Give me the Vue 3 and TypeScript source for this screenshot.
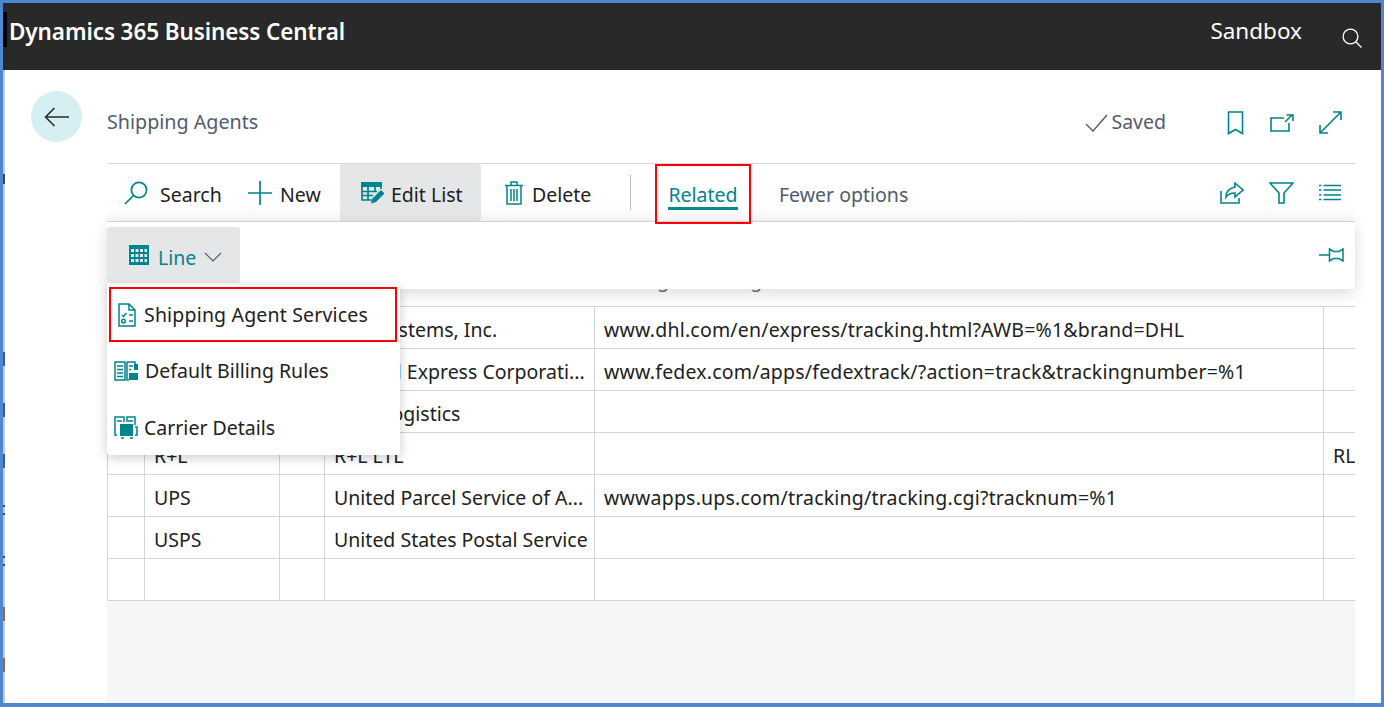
<template>
  <div class="frame">
    <header class="topbar">
      <span class="brand">Dynamics 365 Business Central</span>
      <span class="env">Sandbox</span>
      <svg class="top-search" width="20" height="20" viewBox="0 0 20 20" fill="none" stroke="#fff" stroke-width="1.3">
        <circle cx="8.500" cy="8.500" r="7.400" />
        <path d="M13.800 13.800 19.500 19.500" />
      </svg>
    </header>

    <main class="page">
      <div class="edge-strip"></div>
      <div class="back-col">
        <button class="back-btn">
          <svg width="26" height="20" viewBox="0 0 26 20" fill="none" stroke="#2b2b2b" stroke-width="1.6">
            <path d="M25 10H1.500M10.500 1 1.500 10l9 9" />
          </svg>
        </button>
      </div>

      <div class="content">
        <div class="page-head">
          <span class="page-title">Shipping Agents</span>
          <div class="page-state">
            <svg width="23" height="18" viewBox="0 0 23 18" fill="none" stroke="#505c6d" stroke-width="1.4">
              <path d="M1 10 8 17 22 1" />
            </svg>
            <span>Saved</span>
          </div>
          <div class="page-icons">
            <svg width="17" height="24" viewBox="0 0 17 24" fill="none" stroke="#00848d" stroke-width="1.6">
              <path d="M1.500 1h14v21.500l-7-4-7 4z" />
            </svg>
            <svg width="24" height="18" viewBox="0 0 24 18" fill="none" stroke="#00848d" stroke-width="1.6">
              <path d="M14 4H1v13h18V9M15 8l7-7M16.500 1H23v6" />
            </svg>
            <svg width="23" height="23" viewBox="0 0 23 23" fill="none" stroke="#00848d" stroke-width="1.6">
              <path d="M1 22 22 1M14 1h8v8M1 14v8h8" />
            </svg>
          </div>
        </div>

        <div class="toolbar">
          <button class="tool tool-search">
            <svg width="24" height="24" viewBox="0 0 24 24" fill="none" stroke="#00848d" stroke-width="1.7">
              <circle cx="15" cy="9" r="7.600" />
              <path d="M9.500 14.500 1 23" />
            </svg>
            <span>Search</span>
          </button>
          <button class="tool tool-new">
            <svg width="24" height="24" viewBox="0 0 24 24" fill="none" stroke="#00848d" stroke-width="1.7">
              <path d="M12 0v24M0 12h24" />
            </svg>
            <span>New</span>
          </button>
          <button class="tool tool-edit">
            <svg width="24" height="22" viewBox="0 0 24 22" fill="none">
              <path d="M0 0h21v5H0z" fill="#00848d" />
              <path d="M1 5v13h10M7 5v13M14 5v5M1 9.500h15M1 13.500h11M20 5v2" stroke="#00848d" stroke-width="1.700" />
              <path d="M10 21.500l1.500-5L20 8l3.500 3.500-8.500 8.500z" fill="#00848d" />
            </svg>
            <span>Edit List</span>
          </button>
          <button class="tool tool-delete">
            <svg width="18" height="24" viewBox="0 0 18 24" fill="none" stroke="#00848d" stroke-width="1.500">
              <path d="M0 4.500h18M6 4V1h6v3M2 4.500V23h14V4.500M6 8v12M9 8v12M12 8v12" />
            </svg>
            <span>Delete</span>
          </button>
          <span class="tool-sep"></span>
          <button class="tool-related"><span>Related</span></button>
          <button class="tool-fewer">Fewer options</button>
          <div class="tool-icons">
            <svg width="24" height="22" viewBox="0 0 24 22" fill="none" stroke="#00848d" stroke-width="1.600">
              <path d="M1 9v12h18v-5" />
              <path d="M15 1l8 7-8 7v-4c-4 0-7 1-9 4 0-6 4-9 9-10z" />
            </svg>
            <svg width="25" height="22" viewBox="0 0 25 22" fill="none" stroke="#00848d" stroke-width="1.600">
              <path d="M1 1h23l-9 10v10h-5V11z" />
            </svg>
            <svg width="22" height="17" viewBox="0 0 22 17" fill="none" stroke="#00848d" stroke-width="1.600">
              <path d="M0 1.500h2.500M4.500 1.500H22M0 6h2.500M4.500 6H22M0 11h2.500M4.500 11H22M0 15.500h2.500M4.500 15.500H22" />
            </svg>
          </div>
        </div>

        <div class="grid-area">
          <div class="table-wrap">
            <table class="agents">
              <colgroup>
                <col v-for="w in colWidths" :key="w" :style="{ width: w + 'px' }" />
              </colgroup>
              <thead>
                <tr>
                  <th></th>
                  <th></th>
                  <th></th>
                  <th></th>
                  <th>Package Tracking URL</th>
                  <th></th>
                </tr>
              </thead>
              <tbody>
                <tr v-for="(row, i) in rows" :key="i">
                  <td></td>
                  <td>{{ row.code }}</td>
                  <td></td>
                  <td>{{ row.name }}</td>
                  <td class="url">{{ row.url }}</td>
                  <td>{{ row.extra }}</td>
                </tr>
              </tbody>
            </table>
          </div>

          <div class="related-band">
            <button class="line-btn">
              <svg width="20" height="20" viewBox="0 0 20 20" fill="#00848d">
                <path d="M0 0h20v20H0z" />
                <path d="M2 4h3v3H2zM6.500 4h3v3h-3zM11 4h3v3h-3zM15.500 4H18v3h-2.500zM2 9h3v3H2zM6.500 9h3v3h-3zM11 9h3v3h-3zM15.500 9H18v3h-2.500zM2 14h3v3H2zM6.500 14h3v3h-3zM11 14h3v3h-3zM15.500 14H18v3h-2.500z" fill="#e5e6e8" />
              </svg>
              <span>Line</span>
              <svg width="18" height="10" viewBox="0 0 18 10" fill="none" stroke="#505c6d" stroke-width="1.200">
                <path d="M1 1l8 8 8-8" />
              </svg>
            </button>
            <svg class="pin" width="25" height="14" viewBox="0 0 25 14" fill="none" stroke="#00848d" stroke-width="1.500">
              <path d="M0 7h10M10.500 1l4 2.500h5.500l4-2.500v12l-4-2.500h-5.500l-4 2.500z" />
            </svg>
          </div>

          <div class="related-menu">
            <button v-for="(item, i) in menuItems" :key="item" class="menu-item" :class="{ marked: i === 0 }">
              <svg v-if="i === 0" width="18" height="24" viewBox="0 0 18 24" fill="none" stroke="#00848d" stroke-width="1.500">
                <path d="M1 1h10l6 6v16H1zM11 1v6h6" />
                <path d="M4 12l1.500 1.500L8.500 10M11 12h4M11 18h4" />
                <circle cx="5.500" cy="18" r="1.800" />
              </svg>
              <svg v-else-if="i === 1" width="24" height="20" viewBox="0 0 24 20" fill="none" stroke="#00848d" stroke-width="1.500">
                <path d="M1 1h10v18H1zM13 1h8v7M13 1v18h2" />
                <path d="M3 5h6M3 8.500h6M3 12h6M3 15.500h6M15 5h4M15 8.500h2" />
                <path d="M15 12h9v7h-9z" fill="#00848d" stroke="none" />
                <path d="M20 3h4v6h-4z" fill="#00848d" stroke="none" />
              </svg>
              <svg v-else width="24" height="23" viewBox="0 0 24 23" fill="none" stroke="#00848d" stroke-width="1.500">
                <path d="M3 19H1V1h9v5M13 6V1h8v8" />
                <path d="M3 5h5M14 5h5" />
                <path d="M6 8h13v12H6z" fill="#00848d" stroke="none" />
                <path d="M21 11h2v8h-2M7 22h3M16 22h3" />
              </svg>
              <span>{{ item }}</span>
            </button>
          </div>
        </div>
      </div>
    </main>
  </div>
</template>

<script setup lang="ts">
interface AgentRow {
  code: string
  name: string
  url: string
  extra: string
}

const colWidths = [37, 135, 45, 270, 729, 60]

// the first three codes sit behind the menu, so they stay empty here
const rows: AgentRow[] = [
  { code: '', name: 'DHL Systems, Inc.', url: 'www.dhl.com/en/express/tracking.html?AWB=%1&brand=DHL', extra: '' },
  { code: '', name: 'Federal Express Corporati...', url: 'www.fedex.com/apps/fedextrack/?action=track&trackingnumber=%1', extra: '' },
  { code: '', name: 'SAIA Logistics', url: '', extra: '' },
  { code: 'R+L', name: 'R+L LTL', url: '', extra: 'RL' },
  { code: 'UPS', name: 'United Parcel Service of A...', url: 'wwwapps.ups.com/tracking/tracking.cgi?tracknum=%1', extra: '' },
  { code: 'USPS', name: 'United States Postal Service', url: '', extra: '' },
  { code: '', name: '', url: '', extra: '' }
]

const menuItems = ['Shipping Agent Services', 'Default Billing Rules', 'Carrier Details']
</script>

<style>
html,
body {
  margin: 0;
  overflow: hidden;
}
</style>

<style scoped>
.frame {
  width: 1384px;
  height: 707px;
  box-sizing: border-box;
  border: 3px solid #4f87d3;
  border-bottom-width: 4px;
  display: flex;
  flex-direction: column;
  background: #fff;
  font-family: "Noto Sans", "Open Sans", sans-serif;
  font-size: 19.5px;
  color: #212121;
  overflow: hidden;
}

button {
  border: 0;
  background: none;
  padding: 0;
  font: inherit;
  color: inherit;
}

.topbar {
  height: 67px;
  flex: none;
  background: #292929;
  color: #fff;
  display: flex;
  align-items: center;
  padding: 0 19px 10px 6px;
  box-sizing: border-box;
  position: relative;
}

/* sliver of the window behind the screenshot */
.topbar::before {
  content: '';
  position: absolute;
  left: 0;
  top: 9px;
  width: 4px;
  height: 35px;
  background: #000;
}

.brand {
  position: relative;
  font-size: 22.5px;
  font-weight: 600;
  letter-spacing: -0.1px;
}

.env {
  margin-left: auto;
  font-size: 22.5px;
  margin-right: 40px;
  margin-top: -3px;
}

.top-search {
  margin-top: 12px;
}

.page {
  flex: 1;
  display: flex;
  min-height: 0;
}

.edge-strip {
  width: 2px;
  flex: none;
  background:
    linear-gradient(
      to bottom,
      transparent 104px, #3d4650 104px, #3d4650 114px, transparent 114px,
      transparent 282px, #3c5a96 282px, #3c5a96 296px, transparent 296px,
      transparent 333px, #3c5a96 333px, #3c5a96 347px, transparent 347px,
      transparent 384px, #3c5a96 384px, #3c5a96 398px, transparent 398px,
      transparent 435px, #3d4650 435px, #3d4650 437px, transparent 437px,
      transparent 443px, #3d4650 443px, #3d4650 445px, transparent 445px,
      transparent 486px, #3d4650 486px, #3d4650 488px, transparent 488px,
      transparent 494px, #3d4650 494px, #3d4650 496px, transparent 496px,
      transparent 537px, #9a6a3c 537px, #9a6a3c 551px, transparent 551px,
      transparent 588px, #9a6a3c 588px, #9a6a3c 602px, transparent 602px
    ),
    #c9c9c9;
}

.back-col {
  width: 102px;
  flex: none;
}

.back-btn {
  width: 51px;
  height: 51px;
  margin: 21px 0 0 26px;
  border-radius: 50%;
  background: #d6eff2;
  display: flex;
  align-items: center;
  justify-content: center;
}

.content {
  width: 1248px;
  display: flex;
  flex-direction: column;
}

.page-head {
  height: 93px;
  flex: none;
  box-sizing: border-box;
  display: flex;
  align-items: center;
  padding: 12px 13px 0 0;
}

.page-title {
  color: #505c6d;
  font-size: 19.7px;
  margin-top: -2px;
}

.page-state {
  margin-left: auto;
  display: flex;
  align-items: center;
  gap: 3px;
  color: #505c6d;
}

.page-state span {
  margin-top: -2px;
}

.page-icons {
  width: 115px;
  margin-left: 61px;
  display: flex;
  align-items: center;
  justify-content: space-between;
}

.toolbar {
  height: 59px;
  flex: none;
  box-sizing: border-box;
  border-top: 1px solid #d8d8d8;
  border-bottom: 1px solid #d8d8d8;
  display: flex;
  align-items: center;
  background: linear-gradient(#fff 70%, #f8f8f8);
}

.tool {
  display: flex;
  align-items: center;
  height: 57px;
  flex: none;
}

.tool span {
  padding-top: 3px;
}

.tool-search {
  margin-left: 17px;
  gap: 12px;
  width: 124px;
}

.tool-new {
  gap: 8px;
  width: 92px;
}

.tool-edit {
  width: 141px;
  gap: 6px;
  padding-left: 21px;
  box-sizing: border-box;
  background: #e5e6e8;
  border-radius: 3px;
}

.tool-delete {
  margin-left: 24px;
  gap: 9px;
  width: 125px;
}

.tool-sep {
  width: 1px;
  height: 35px;
  background: #b6bcc3;
  flex: none;
}

.tool-related {
  width: 96px;
  height: 60px;
  margin: 0 0 0 24px;
  align-self: flex-start;
  box-sizing: border-box;
  border: 2px solid #f00;
  color: #00848d;
  display: flex;
  align-items: center;
  justify-content: center;
  position: relative;
  z-index: 2;
}

.tool-related span {
  border-bottom: 3px solid #0a8a8a;
  line-height: 25px;
  padding: 1px 0 0;
  margin-top: 2px;
}

.tool-fewer {
  margin-left: 28px;
  padding-top: 3px;
  color: #505c6d;
}

.tool-icons {
  margin-left: auto;
  margin-right: 14px;
  width: 121px;
  display: flex;
  align-items: center;
  justify-content: space-between;
}

.grid-area {
  flex: 1;
  position: relative;
  background: #f5f6f8;
  min-height: 0;
}

.table-wrap {
  overflow: hidden;
  background: #fff;
}

.agents {
  table-layout: fixed;
  border-collapse: collapse;
  width: 1276px;
  font-size: 19.5px;
}

.agents th {
  height: 84px;
  padding: 0 0 13px 9px;
  font-weight: 400;
  text-align: left;
  vertical-align: bottom;
  color: #6b7480;
  border-bottom: 1px solid #d3d4da;
  box-sizing: border-box;
}

.agents td {
  height: 42px;
  box-sizing: border-box;
  padding: 4px 0 0 9px;
  border: 1px solid #d3d4da;
  white-space: nowrap;
  overflow: hidden;
  color: #212121;
}

.agents td.url {
  letter-spacing: 0.2px;
}

.related-band {
  position: absolute;
  left: 0;
  right: 0;
  top: 0;
  height: 67px;
  background: #fff;
  box-shadow: 0 4px 14px rgba(0, 0, 0, 0.14);
  display: flex;
  align-items: flex-start;
  justify-content: space-between;
  padding: 5px 11px 0 0;
  box-sizing: border-box;
}

.line-btn {
  width: 133px;
  height: 56px;
  background: #e5e6e8;
  border-radius: 3px;
  color: #00848d;
  display: flex;
  align-items: center;
  gap: 9px;
  padding-left: 22px;
  box-sizing: border-box;
}

.line-btn span {
  margin: 4px 3px 0 0;
}

.line-btn svg:last-child {
  margin-left: -4px;
  margin-top: 3px;
}

.pin {
  margin-top: 21px;
}

.related-menu {
  position: absolute;
  left: 0;
  top: 63px;
  width: 293px;
  height: 170px;
  background: #fff;
  box-shadow: 0 3px 12px rgba(0, 0, 0, 0.2);
  border-radius: 0 0 3px 3px;
  display: flex;
  flex-direction: column;
}

.menu-item {
  height: 57px;
  flex: none;
  display: flex;
  align-items: center;
  gap: 7px;
  padding-left: 7px;
  box-sizing: border-box;
  text-align: left;
}

.menu-item:last-child {
  gap: 6px;
}

.menu-item.marked {
  width: 288px;
  height: 55px;
  margin: 2px 0 0 2px;
  border: 2px solid #f00;
  padding-left: 7px;
  gap: 8px;
  letter-spacing: 0.18px;
}
</style>
